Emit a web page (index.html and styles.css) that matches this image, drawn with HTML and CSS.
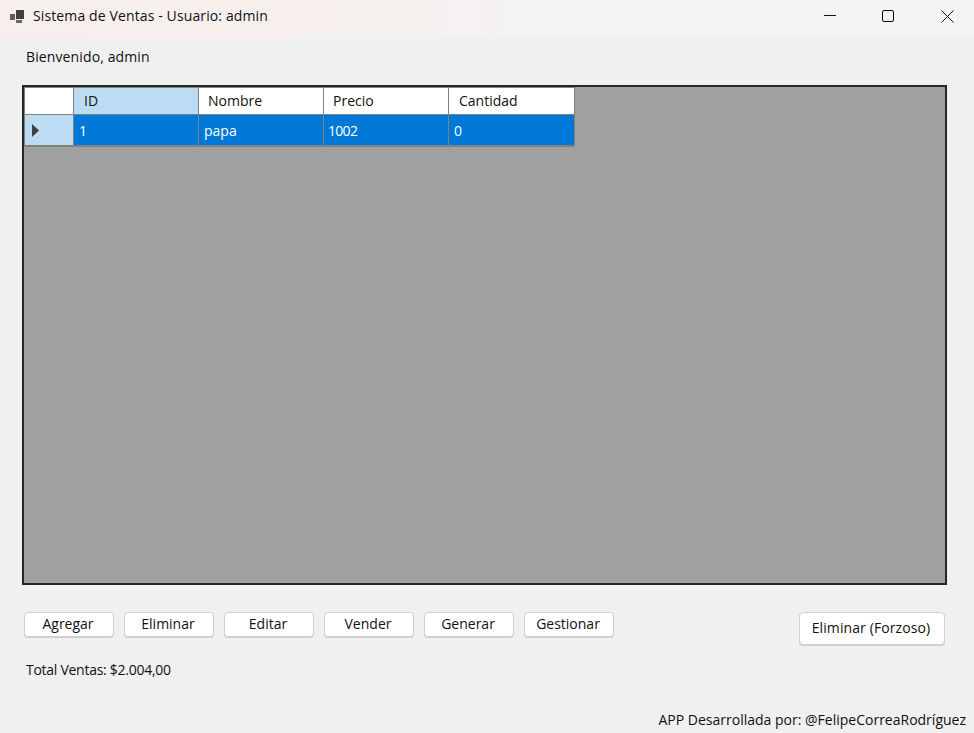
FILE: index.html
```html
<!DOCTYPE html>
<html lang="es">
<head>
<meta charset="utf-8">
<title>Sistema de Ventas - Usuario: admin</title>
<link rel="stylesheet" href="styles.css">
</head>
<body>
<div class="window">
  <header class="titlebar">
    <svg class="app-icon" width="16" height="16" viewBox="0 0 16 16"><path fill="#5f5f5f" d="M1 6h5v6H1z"/><path fill="#3f3f3f" d="M7 2h8v9H7z"/><path fill="#6a6a6a" d="M7 12h6v3H7z"/></svg>
    <span class="title">Sistema de Ventas - Usuario: admin</span>
    <div class="controls">
      <svg width="12" height="12" viewBox="0 0 12 12"><path d="M0 5.500h12" stroke="#111" fill="none"/></svg>
      <svg class="max-icon" width="12" height="12" viewBox="0 0 12 12"><rect x=".5" y=".5" width="11" height="11" rx="1.500" stroke="#111" fill="none"/></svg>
      <svg width="13" height="13" viewBox="0 0 13 13"><path d="M.5.5l12 12M12.500.5l-12 12" stroke="#111" fill="none"/></svg>
    </div>
  </header>
  <main class="content">
    <p class="welcome">Bienvenido, admin</p>
    <section class="datagrid">
      <div class="table">
        <div class="cell corner"></div>
        <div class="cell head head-active">ID</div>
        <div class="cell head">Nombre</div>
        <div class="cell head">Precio</div>
        <div class="cell head head-last">Cantidad</div>
        <div class="cell rowhead"><svg width="8" height="13" viewBox="0 0 8 13"><path fill="#404040" d="M0 0l7 6.500L0 13z"/></svg></div>
        <div class="cell sel">1</div>
        <div class="cell sel">papa</div>
        <div class="cell sel num">1002</div>
        <div class="cell sel">0</div>
      </div>
    </section>
    <div class="actions">
      <div class="btn-group">
        <button class="btn">Agregar</button>
        <button class="btn">Eliminar</button>
        <button class="btn">Editar</button>
        <button class="btn">Vender</button>
        <button class="btn">Generar</button>
        <button class="btn">Gestionar</button>
      </div>
      <button class="btn btn-large">Eliminar (Forzoso)</button>
    </div>
    <p class="total">Total Ventas: $2.004,00</p>
    <p class="credit">APP Desarrollada por: @FelipeCorreaRodríguez</p>
  </main>
</div>
</body>
</html>
```
FILE: styles.css
```css
* { box-sizing: border-box; }
html, body { margin: 0; padding: 0; }
body {
  width: 974px;
  height: 733px;
  overflow: hidden;
  background: #f0f0f0;
  color: #111;
  font-family: "Open Sans", "Noto Sans", sans-serif;
  font-size: 14px;
}
.window { display: flex; flex-direction: column; height: 733px; }
.titlebar {
  height: 37px;
  flex: none;
  display: flex;
  align-items: center;
  padding-left: 9px;
  padding-bottom: 5px;
  background: linear-gradient(90deg, #f8efec 0, #f6f0ee 35%, #f3f3f3 60%, #f3f3f3 100%);
}
.app-icon { flex: none; }
.title { margin-left: 8px; padding-bottom: 2px; font-size: 14px; letter-spacing: 0.12px; color: #111; }
.controls {
  margin-left: auto;
  width: 150px;
  padding-right: 20px;
  display: flex;
  justify-content: space-between;
  align-items: center;
}
.max-icon { margin-right: 1px; }
.content { flex: 1; padding: 0 8px 0 22px; display: flex; flex-direction: column; }
.welcome { margin: 10px 0 0 4px; height: 38px; line-height: 19px; letter-spacing: 0.12px; }
.datagrid {
  width: 925px;
  height: 500px;
  flex: none;
  border: 2px solid #262626;
  background: #a0a0a0;
}
.table {
  display: grid;
  grid-template-columns: 49px 125px 125px 125px 125px;
  grid-template-rows: 27px 31px;
  width: 551px;
  background: #fff;
  border: 1px solid #808080;
}
.cell {
  display: flex;
  align-items: center;
  border-right: 1px solid #808080;
  border-bottom: 1px solid #808080;
  line-height: 19px;
}
.cell:nth-child(5n) { border-right: 0; }
.head { padding-left: 9px; padding-bottom: 2px; background: #fff; }
.head-active { background: #bcdcf4; padding-left: 10px; }
.head-last { padding-left: 10px; }
.corner { background: #fff; }
.rowhead { background: #bcdcf4; padding-left: 7px; }
.sel { background: #0078d7; color: #fff; padding-left: 5px; }
.num { letter-spacing: -0.7px; padding-left: 4px; }
.actions {
  display: flex;
  justify-content: space-between;
  align-items: flex-start;
  width: 925px;
  margin-top: 27px;
  padding: 0 2px;
  height: 33px;
  flex: none;
}
.btn-group { display: flex; gap: 10px; }
.btn {
  width: 90px;
  height: 25px;
  padding: 0 2px 2px 0;
  border: 1px solid #d0d0d0;
  border-radius: 4px;
  background: #fff;
  color: #111;
  font: inherit;
  line-height: 1;
  box-shadow: 0 1px 0 #cfcfcf;
}
.btn-large { width: 146px; height: 33px; letter-spacing: 0.1px; }
.total { margin: 15px 0 0 4px; line-height: 19px; height: 19px; letter-spacing: -0.27px; }
.credit { margin: 31px 0 0 0; text-align: right; line-height: 19px; white-space: nowrap; }
```
